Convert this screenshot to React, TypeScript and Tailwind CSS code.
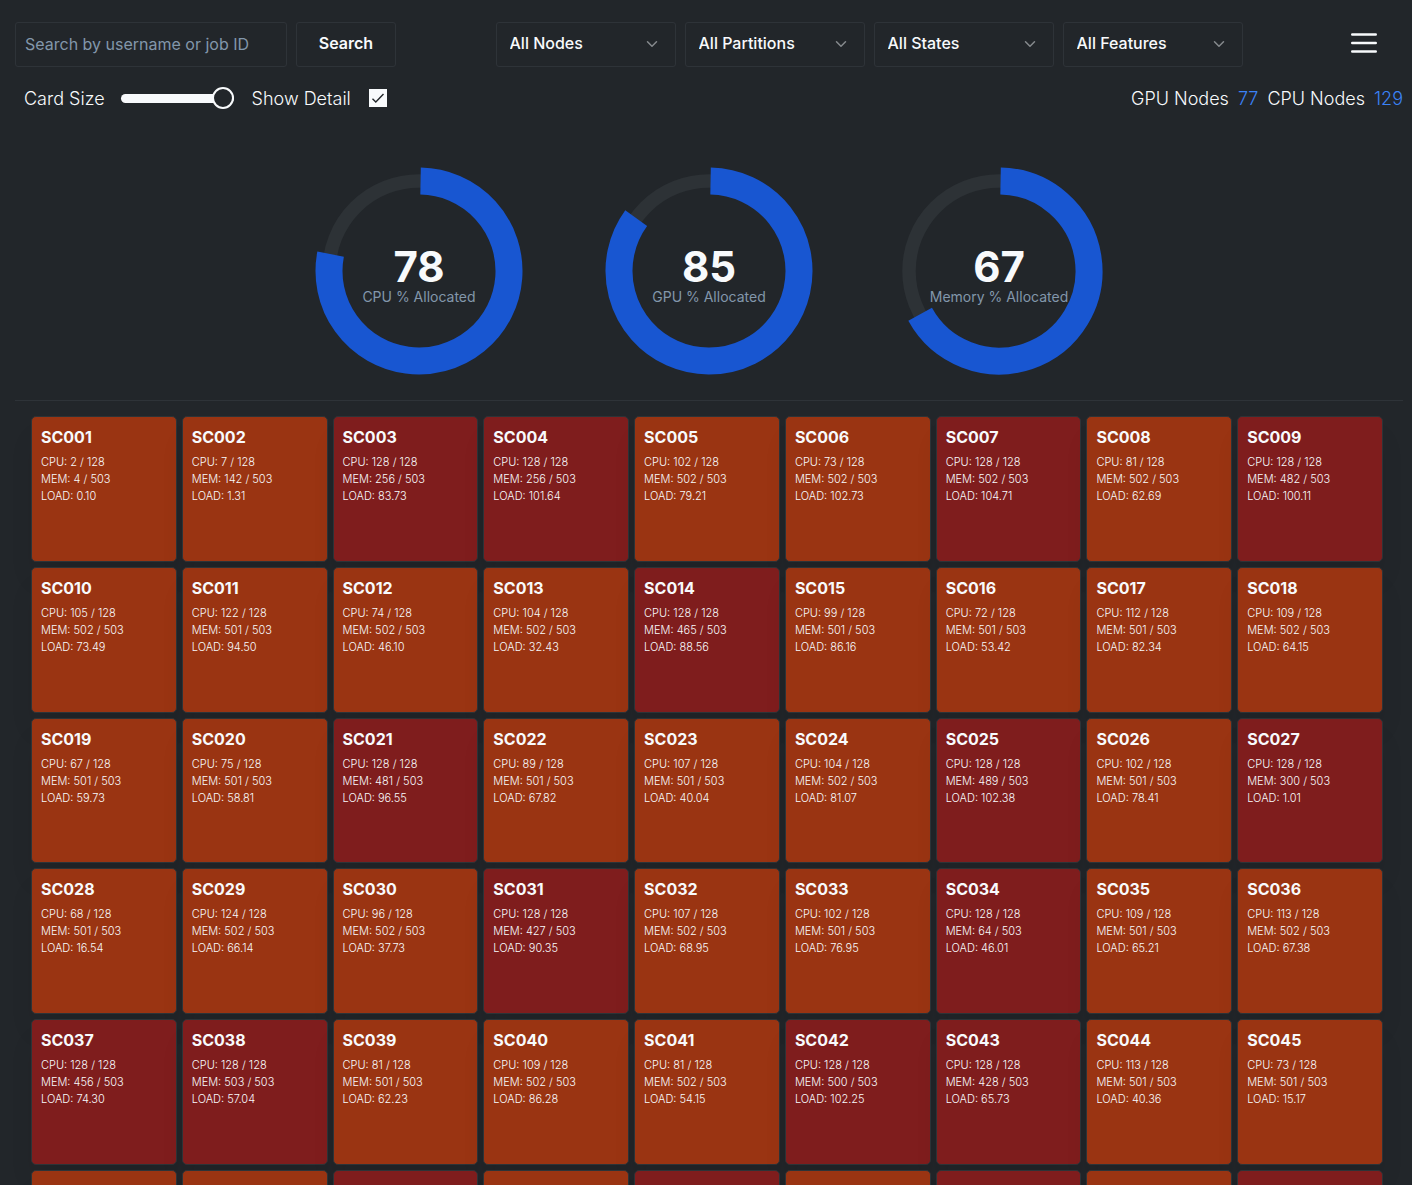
import { useState } from "react";

type Node = { name: string; full: boolean; cpu?: string; mem?: string; load?: string };

const rows: [string, string, string][] = [
  ["2", "4", "0.10"], ["7", "142", "1.31"], ["128", "256", "83.73"], ["128", "256", "101.64"], ["102", "502", "79.21"], ["73", "502", "102.73"], ["128", "502", "104.71"], ["81", "502", "62.69"], ["128", "482", "100.11"],
  ["105", "502", "73.49"], ["122", "501", "94.50"], ["74", "502", "46.10"], ["104", "502", "32.43"], ["128", "465", "88.56"], ["99", "501", "86.16"], ["72", "501", "53.42"], ["112", "501", "82.34"], ["109", "502", "64.15"],
  ["67", "501", "59.73"], ["75", "501", "58.81"], ["128", "481", "96.55"], ["89", "501", "67.82"], ["107", "501", "40.04"], ["104", "502", "81.07"], ["128", "489", "102.38"], ["102", "501", "78.41"], ["128", "300", "1.01"],
  ["68", "501", "16.54"], ["124", "502", "66.14"], ["96", "502", "37.73"], ["128", "427", "90.35"], ["107", "502", "68.95"], ["102", "501", "76.95"], ["128", "64", "46.01"], ["109", "501", "65.21"], ["113", "502", "67.38"],
  ["128", "456", "74.30"], ["128", "503", "57.04"], ["81", "501", "62.23"], ["109", "502", "86.28"], ["81", "502", "54.15"], ["128", "500", "102.25"], ["128", "428", "65.73"], ["113", "501", "40.36"], ["73", "501", "15.17"],
];

const label = (n: number) => "SC" + String(n).padStart(3, "0");

const nodes: Node[] = [
  ...rows.map(([cpu, mem, load], i) => ({ name: label(i + 1), full: cpu === "128", cpu, mem, load })),
  ...[false, false, true, false, true, false, true, false, true].map((full) => ({ name: "", full })),
];

function NodeCard({ node, detail }: { node: Node; detail: boolean }) {
  return (
    <article
      className={`aspect-square rounded-[5px] border border-[#2d3337] px-[9px] pt-2 text-[#f8fafc] shadow-[0_20px_25px_-5px_rgba(0,0,0,0.1)] ${
        node.full ? "bg-[#7f1d1d]" : "bg-[#9a3412]"
      }`}
    >
      {node.name && <h2 className="text-base font-bold">{node.name}</h2>}
      {detail && node.cpu && (
        <div className="mt-[5px] text-[11px] leading-[17px] font-light">
          <p>CPU: {node.cpu} / 128</p>
          <p>MEM: {node.mem} / 503</p>
          <p>LOAD: {node.load}</p>
        </div>
      )}
    </article>
  );
}

function Gauge({ value, title }: { value: number; title: string }) {
  const c = 104;
  const r = 90;
  const point = (deg: number) => {
    const a = (deg * Math.PI) / 180;
    return `${c + r * Math.sin(a)} ${c - r * Math.cos(a)}`;
  };
  const end = value * 3.6;
  return (
    <div className="relative size-[208px]">
      <svg viewBox="0 0 208 208" className="size-full" fill="none" aria-hidden="true">
        <circle cx={c} cy={c} r={r} stroke="#2d3236" strokeWidth="13.5" />
        <path d={`M${point(1)}A${r} ${r} 0 1 1 ${point(end)}`} stroke="#1856d1" strokeWidth="27" />
      </svg>
      <div className="absolute inset-0 flex flex-col items-center justify-center pt-3">
        <p className="text-[42px] leading-10 font-bold text-[#f8fafc]">{value}</p>
        <p className="text-sm whitespace-nowrap text-[#8297ab]">{title}</p>
      </div>
    </div>
  );
}

function Filter({ name, option }: { name: string; option: string }) {
  return (
    <div className="relative w-[180px]">
      <select
        aria-label={name}
        className="h-[45px] w-full appearance-none rounded-[3px] border border-[#2e3338] bg-transparent pr-10 pb-1 pl-[13px] text-base font-medium text-[#f8fafc]"
      >
        <option>{option}</option>
      </select>
      <svg viewBox="0 0 12 8" className="pointer-events-none absolute top-[18px] right-[18px] h-2 w-3" fill="none" stroke="#868a8d" strokeWidth="1.5" strokeLinecap="round" strokeLinejoin="round" aria-hidden="true">
        <path d="M1.500 1.800 6 6.300l4.500-4.500" />
      </svg>
    </div>
  );
}

export default function App() {
  const [detail, setDetail] = useState(true);
  return (
    <div className="h-screen overflow-hidden bg-[#22262a] pr-[9px] pl-[15px] font-['Inter',sans-serif] text-[#f8fafc]">
      <header className="flex items-center justify-between pt-[22px]">
        <form className="flex gap-[9px]" onSubmit={(e) => e.preventDefault()}>
          <input
            type="text"
            aria-label="Search by username or job ID"
            placeholder="Search by username or job ID"
            className="h-[45px] w-[272px] rounded-[3px] border border-[#2e3338] bg-transparent px-[9px] pb-0.5 text-base placeholder:text-[#8297ab]"
          />
          <button type="submit" className="h-[45px] w-[100px] rounded-[3px] border border-[#2e3338] pb-1 text-base font-semibold">
            Search
          </button>
        </form>
        <div className="mr-2 flex gap-[9px]">
          <Filter name="Node type" option="All Nodes" />
          <Filter name="Partition" option="All Partitions" />
          <Filter name="State" option="All States" />
          <Filter name="Feature" option="All Features" />
        </div>
        <button type="button" aria-label="Open menu" className="mr-[25px] pb-1">
          <svg viewBox="0 0 28 22" className="h-[22px] w-7" stroke="#f8fafc" strokeWidth="2.600" strokeLinecap="round" aria-hidden="true">
            <path d="M2.300 2.500h23.400M2.300 11h23.400M2.300 19.500h23.400" />
          </svg>
        </button>
      </header>

      <div className="mt-[18px] flex items-center justify-between pl-[9px] text-lg font-light">
        <div className="flex items-center">
          <label htmlFor="card-size">Card Size</label>
          <input
            id="card-size"
            type="range"
            defaultValue={100}
            className="mb-0.5 ml-4 h-[22px] w-[113px] appearance-none bg-transparent [&::-webkit-slider-runnable-track]:h-[9px] [&::-webkit-slider-runnable-track]:rounded-full [&::-webkit-slider-runnable-track]:bg-[#f8fafc] [&::-webkit-slider-thumb]:-mt-[7px] [&::-webkit-slider-thumb]:size-[22px] [&::-webkit-slider-thumb]:appearance-none [&::-webkit-slider-thumb]:rounded-full [&::-webkit-slider-thumb]:border-2 [&::-webkit-slider-thumb]:border-[#f8fafc] [&::-webkit-slider-thumb]:bg-[#22262a]"
          />
          <label htmlFor="detail" className="ml-[18px]">Show Detail</label>
          <span className="relative mb-0.5 ml-[18px] size-[18px]">
            <input
              id="detail"
              type="checkbox"
              checked={detail}
              onChange={(e) => setDetail(e.target.checked)}
              className="block size-[18px] appearance-none border border-[#f8fafc] checked:bg-[#f8fafc]"
            />
            <svg viewBox="0 0 18 18" className="pointer-events-none absolute inset-0 size-full" fill="none" stroke="#22262a" strokeWidth="1.400" aria-hidden="true">
              <path d="m3.500 9.800 3.300 3.200L14.500 5" />
            </svg>
          </span>
        </div>
        <p className="flex gap-[9px]">
          <span>GPU Nodes</span>
          <span className="text-[#3b82f6]">77</span>
          <span>CPU Nodes</span>
          <span className="text-[#3b82f6]">129</span>
        </p>
      </div>

      <section className="mt-[54px] flex justify-center gap-[82px]" aria-label="Allocation">
        <Gauge value={78} title="CPU % Allocated" />
        <Gauge value={85} title="GPU % Allocated" />
        <Gauge value={67} title="Memory % Allocated" />
      </section>

      <hr className="mt-[25px] border-[#2e3338]" />

      <main className="grid grid-cols-9 gap-[5px] pt-[15px] pr-5 pl-4">
        {nodes.map((n, i) => (
          <NodeCard key={i} node={n} detail={detail} />
        ))}
      </main>
    </div>
  );
}
